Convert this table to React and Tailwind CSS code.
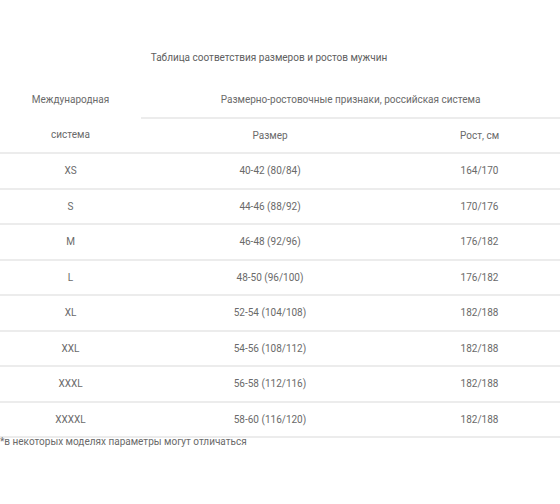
const rows = [
  ['XS', '40-42 (80/84)', '164/170'],
  ['S', '44-46 (88/92)', '170/176'],
  ['M', '46-48 (92/96)', '176/182'],
  ['L', '48-50 (96/100)', '176/182'],
  ['XL', '52-54 (104/108)', '182/188'],
  ['XXL', '54-56 (108/112)', '182/188'],
  ['XXXL', '56-58 (112/116)', '182/188'],
  ['XXXXL', '58-60 (116/120)', '182/188'],
];

const App = () => {
  return (
    <div className="w-[560px] h-[504px] bg-white text-[#6a6a6a] text-[10px] font-['Roboto','Liberation_Sans',sans-serif] pt-[50px]">
      <p className="leading-[16px] text-center pr-[22px] text-[#606060]">
        Таблица соответствия размеров и ростов мужчин
      </p>

      {/* Size table */}
      <table className="mt-[16px] w-full table-fixed border-collapse">
        <colgroup>
          <col className="w-[141px]" />
          <col className="w-[258px]" />
          <col className="w-[161px]" />
        </colgroup>
        <thead>
          <tr className="h-[35.5px]">
            <th className="font-normal text-center p-0">Международная</th>
            <th colSpan={2} className="font-normal text-center p-0 border-b-2 border-[#ececec]">
              Размерно-ростовочные признаки, российская система
            </th>
          </tr>
          <tr className="h-[35.5px] border-b-2 border-[#ececec]">
            <th className="font-normal text-center p-0">система</th>
            <th className="font-normal text-center p-0">Размер</th>
            <th className="font-normal text-center p-0">Рост, см</th>
          </tr>
        </thead>
        <tbody>
          {rows.map((row) => (
            <tr key={row[0]} className="h-[35.5px] border-b-2 border-[#ececec]">
              <td className="text-center p-0">{row[0]}</td>
              <td className="text-center p-0">{row[1]}</td>
              <td className="text-center p-0">{row[2]}</td>
            </tr>
          ))}
        </tbody>
      </table>

      <p className="leading-[10px] -mt-[1px]">*в некоторых моделях параметры могут отличаться</p>
    </div>
  );
};

export default App;
